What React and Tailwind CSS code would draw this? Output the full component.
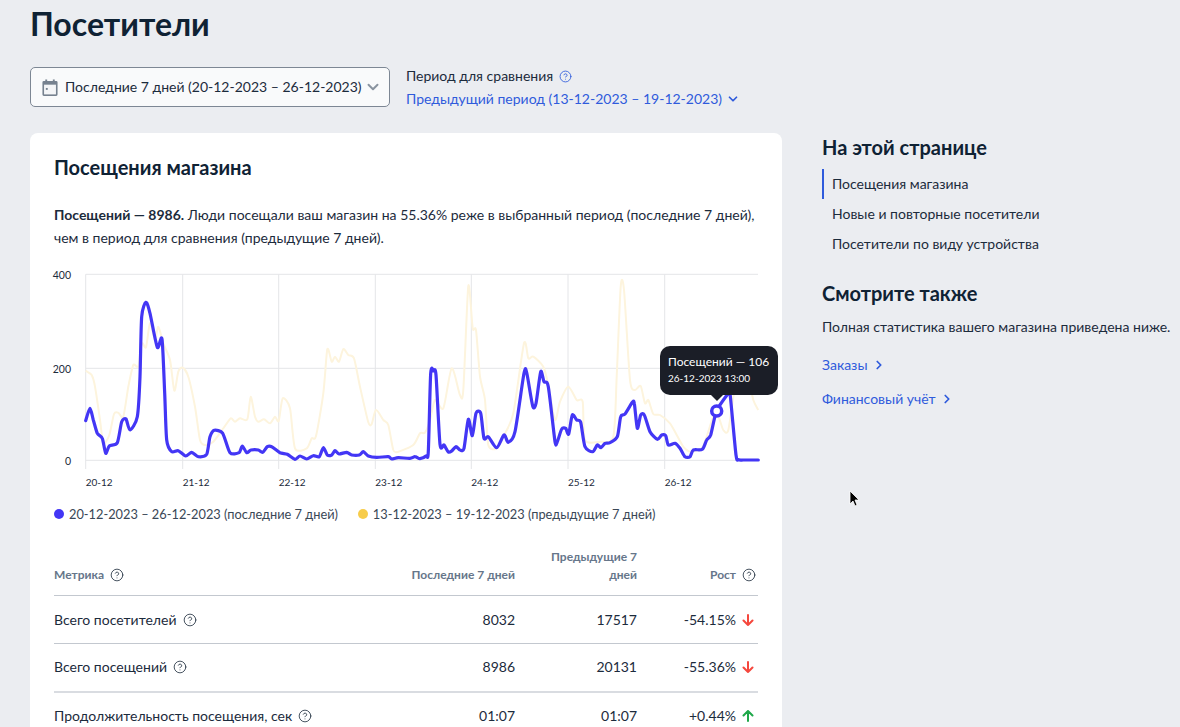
import React from 'react';
import { ChevronDown, ChevronRight, CircleHelp } from 'lucide-react';

// chart points are read off a 3x crop, x offset 40 and y offset 260 on the page
const toChart = ([x, y]) => [x / 3 - 14, y / 3 - 4];
const shift = (pts) => pts.map(([x, y]) => [x + 1080, y]);

const bluePoints = [
  [137,482],[150,445],[160,480],[172,520],[187,535],[197,580],[208,558],[232,548],[245,485],[258,477],[270,510],[292,470],[300,350],[305,170],[318,127],[330,160],[352,262],[366,237],[374,400],[380,540],[395,575],[415,572],[437,588],[455,577],[475,590],[500,583],[510,530],[523,511],[548,520],[570,578],[597,578],[607,558],[620,578],[633,570],[655,570],[668,577],[682,560],[695,560],[720,578],[742,583],[765,598],[780,588],[800,597],[820,587],[838,590],[850,563],[862,585],[875,585],[885,572],[897,582],[920,577],[935,585],[958,585],[970,575],[985,588],[1010,592],[1045,590],[1055,597],
  ...shift([[-5,593],[30,595],[45,590],[60,596],[78,588],[85,575],[92,340],[100,333],[108,345],[120,553],[132,555],[145,576],[155,573],[168,560],[180,570],[192,565],[205,478],[217,527],[228,460],[242,460],[252,535],[265,530],[290,563],[312,525],[325,547],[345,515],[372,340],[380,338],[398,438],[408,430],[422,335],[432,365],[445,380],[465,545],[472,545],[485,507],[497,505],[506,522],[517,465],[530,480],[542,487],[555,560],[578,575],[592,555],[603,563],[615,550],[630,548],[652,530],[662,470],[675,462],[697,427],[703,430],[712,505],[722,465],[733,465],[750,515],[772,538],[785,525],[797,527],[805,555],[825,550],[840,565],[855,590],[870,590],[880,570],[907,568],[920,540],[932,525],[950,452],[985,400],[990,400],[1008,585],[1016,599],[1030,600],[1075,600]]),
];

const yellowPoints = [
  [137,332],[155,345],[165,380],[180,480],[190,550],[208,525],[222,462],[235,458],[250,470],[265,380],[280,315],[295,320],[305,250],[318,262],[330,190],[345,240],[355,200],[370,250],[390,300],[403,392],[415,335],[428,323],[445,350],[465,440],[480,540],[495,555],[520,545],[550,505],[572,475],[585,485],[600,475],[622,478],[632,410],[645,470],[655,485],[672,478],[690,490],[705,470],[716,483],[728,415],[750,445],[765,565],[800,565],[815,535],[828,528],[850,400],[862,268],[875,305],[885,290],[897,305],[910,267],[925,285],[942,295],[960,380],[985,487],[995,492],[1008,450],[1030,480],[1045,495],[1060,570],
  ...shift([[-5,575],[40,555],[60,520],[75,518],[90,480],[105,420],[130,445],[155,325],[180,405],[190,390],[205,78],[218,205],[228,210],[240,350],[255,420],[265,555],[290,565],[310,530],[340,460],[372,250],[385,295],[400,290],[430,320],[445,375],[465,480],[480,425],[505,380],[530,420],[548,425],[555,540],[600,545],[640,530],[650,350],[662,80],[672,90],[690,360],[705,390],[722,378],[735,430],[745,420],[760,462],[780,465],[810,490],[830,525],[850,560],[870,575],[905,565],[920,530],[940,470],[955,470],[970,510],[985,510],[1005,380],[1025,300],[1045,350],[1060,420],[1075,450]]),
];

// catmull-rom through the points with a low tension, so steep spikes don't overshoot
const smoothPath = (raw) => {
  const pts = raw.map(toChart);
  const t = 8;
  let d = `M${pts[0][0]} ${pts[0][1]}`;
  for (let i = 0; i < pts.length - 1; i++) {
    const p0 = pts[i - 1] || pts[i];
    const p1 = pts[i];
    const p2 = pts[i + 1];
    const p3 = pts[i + 2] || p2;
    const c1 = [p1[0] + (p2[0] - p0[0]) / t, p1[1] + (p2[1] - p0[1]) / t];
    const c2 = [p2[0] - (p3[0] - p1[0]) / t, p2[1] - (p3[1] - p1[1]) / t];
    d += `C${c1[0].toFixed(1)} ${c1[1].toFixed(1)} ${c2[0].toFixed(1)} ${c2[1].toFixed(1)} ${p2[0].toFixed(1)} ${p2[1].toFixed(1)}`;
  }
  return d;
};

const gridY = [{ y: 10.3, label: '400', ly: 15 }, { y: 104.3, label: '200', ly: 109 }, { y: 196.3, label: '0', ly: 201 }];
const gridX = [
  { x: 31.7, label: '20-12' },
  { x: 128.7, label: '21-12' },
  { x: 224.7, label: '22-12' },
  { x: 321.3, label: '23-12' },
  { x: 417.3, label: '24-12' },
  { x: 514, label: '25-12' },
  { x: 610.7, label: '26-12' },
];

const VisitsChart = () => (
  <svg width="706" height="226" viewBox="0 0 706 226" className="block overflow-visible">
    {gridY.map((g) => (
      <g key={g.label}>
        <line x1="31.7" x2="704" y1={g.y} y2={g.y} stroke="#e4e5e8" strokeWidth="1" />
        <text x="17" y={g.ly} textAnchor="end" fontSize="10.5" fill="#1c2b3c">{g.label}</text>
      </g>
    ))}
    {gridX.map((g) => (
      <g key={g.label}>
        <line x1={g.x} x2={g.x} y1="10.3" y2="205" stroke="#e4e5e8" strokeWidth="1" />
        <text x={g.x} y="222" fontSize="10" fill="#1c2b3c">{g.label}</text>
      </g>
    ))}
    <path d={smoothPath(yellowPoints)} fill="none" stroke="#fdf4dd" strokeWidth="2" strokeLinejoin="round" />
    <path d={smoothPath(bluePoints)} fill="none" stroke="#4336f5" strokeWidth="3.2" strokeLinejoin="round" strokeLinecap="round" />
    <circle cx="662.7" cy="147" r="5" fill="#fff" stroke="#4336f5" strokeWidth="3.5" />
  </svg>
);

const CalendarIcon = () => (
  <svg width="16" height="17" viewBox="0 0 16 18" fill="none">
    <path d="M3 0.5h2V2h6V0.5h2V2h1.5A1.5 1.5 0 0 1 16 3.5v13a1.5 1.5 0 0 1-1.5 1.5h-13A1.5 1.5 0 0 1 0 16.5v-13A1.5 1.5 0 0 1 1.5 2H3z" fill="#76818f" />
    <rect x="1.7" y="6" width="12.6" height="10.3" fill="#f4f5f7" />
    <rect x="3.6" y="9.5" width="2" height="2" fill="#76818f" />
  </svg>
);

const Help = ({ className = 'text-[#1f2d3d]' }) => (
  <CircleHelp size={14} strokeWidth={1.4} className={`shrink-0 ${className}`} />
);

// short, wide arrow, the lucide one is too narrow here
const GrowthArrow = ({ up }) => (
  <svg width="12" height="12" viewBox="0 0 12 12" fill="none" strokeWidth="2" strokeLinecap="round" strokeLinejoin="round"
    className={up ? 'rotate-180 text-[#1fa84a]' : 'text-[#f5473d]'} stroke="currentColor">
    <path d="M6 1v10M1.5 6.5L6 11l4.5-4.5" />
  </svg>
);

const rows = [
  { name: 'Всего посетителей', now: '8032', prev: '17517', growth: '-54.15%', up: false, border: 'border-b border-[#c3c8cf]' },
  { name: 'Всего посещений', now: '8986', prev: '20131', growth: '-55.36%', up: false, border: 'border-b-2 border-[#d9dce1]' },
  { name: 'Продолжительность посещения, сек', now: '01:07', prev: '01:07', growth: '+0.44%', up: true, border: '' },
];

const MetricsTable = () => (
  <table className="w-full border-collapse text-sm text-[#1c2b3c]">
    <thead>
      <tr className="border-b border-[#c3c8cf] text-xs font-bold text-[#66768a]">
        <th className="pb-[11px] text-left align-bottom font-bold">
          <span className="flex items-center gap-[6px] leading-[18px]">Метрика <Help className="text-[#1f2d3d]" /></span>
        </th>
        <th className="w-[170px] pb-[11px] text-right align-bottom font-bold leading-[18px]">Последние 7 дней</th>
        <th className="w-[122px] pb-[11px] pl-[24px] text-right align-bottom font-bold leading-[18px]">Предыдущие 7 дней</th>
        <th className="w-[121px] pb-[11px] text-right align-bottom font-bold">
          <span className="flex items-center justify-end gap-[6px] pr-[2px] leading-[18px]">Рост <Help /></span>
        </th>
      </tr>
    </thead>
    <tbody>
      {rows.map((r) => (
        <tr key={r.name} className={`h-[48px] ${r.border}`}>
          <td>
            <span className="flex items-center gap-[6px]">{r.name} <Help /></span>
          </td>
          <td className="text-right">{r.now}</td>
          <td className="text-right">{r.prev}</td>
          <td>
            <span className="flex items-center justify-end gap-[6px] pr-[4px]">
              {r.growth}
              <GrowthArrow up={r.up} />
            </span>
          </td>
        </tr>
      ))}
    </tbody>
  </table>
);

const SideNav = () => (
  <aside className="ml-[40px] w-[358px] shrink-0 text-[#1c2b3c]">
    <h2 className="text-xl font-bold leading-[28px] text-[#0f2234]">На этой странице</h2>
    <ul className="mt-[8px] text-sm">
      <li className="flex h-[30px] items-center border-l-2 border-[#2f5bdc] pl-[8px]">Посещения магазина</li>
      <li className="flex h-[30px] items-center border-l-2 border-transparent pl-[8px]">Новые и повторные посетители</li>
      <li className="flex h-[30px] items-center border-l-2 border-transparent pl-[8px]">Посетители по виду устройства</li>
    </ul>
    <h2 className="mt-[20px] text-xl font-bold leading-[28px] text-[#0f2234]">Смотрите также</h2>
    <p className="mt-[10px] text-sm leading-[20px]">Полная статистика вашего магазина приведена ниже.</p>
    <a className="mt-[18px] flex items-center gap-[4px] text-sm leading-[20px] text-[#2f5bdc]">
      Заказы <ChevronRight size={14} strokeWidth={3} />
    </a>
    <a className="mt-[14px] flex items-center gap-[4px] text-sm leading-[20px] text-[#2f5bdc]">
      Финансовый учёт <ChevronRight size={14} strokeWidth={3} />
    </a>
  </aside>
);

export default function App() {
  return (
    <div className="relative h-[727px] overflow-hidden bg-[#ebedf1] pl-[30px] font-['Lato','Noto_Sans',sans-serif] text-[#1c2b3c]">
      <h1 className="pt-[4px] text-[32px] font-bold leading-[40px] text-[#0f2234]">Посетители</h1>

      <div className="mt-[22px] flex items-start">
        <button className="mt-[1px] flex h-[40px] w-[360px] items-center rounded-[5px] border border-[#7d8794] bg-[#f9fafb] pl-[11px] text-sm">
          <CalendarIcon />
          <span className="ml-[7px]">Последние 7 дней (20-12-2023 – 26-12-2023)</span>
          <ChevronDown size={18} strokeWidth={2.6} className="ml-[2px] text-[#8a94a0]" />
        </button>
        <div className="ml-[16px] text-sm">
          <div className="flex items-center gap-[6px] leading-[20px]">
            Период для сравнения <CircleHelp size={13} strokeWidth={1.6} className="text-[#2f5bdc]" />
          </div>
          <div className="mt-[3px] flex items-center gap-[4px] leading-[20px] text-[#2f5bdc]">
            Предыдущий период (13-12-2023 – 19-12-2023) <ChevronDown size={14} strokeWidth={3} />
          </div>
        </div>
      </div>

      <div className="mt-[24px] flex items-start">
        <main className="w-[752px] shrink-0 rounded-lg bg-white px-[24px] pt-[20px] pb-[24px]">
          <h2 className="text-xl font-bold leading-[28px] text-[#0f2234]">Посещения магазина</h2>
          <p className="mt-[22px] text-sm leading-[23px]">
            <b>Посещений — 8986.</b> Люди посещали ваш магазин на 55.36% реже в выбранный период (последние 7 дней), чем в период для сравнения (предыдущие 7 дней).
          </p>
          <div className="mt-[15px]">
            <VisitsChart />
          </div>
          <div className="mt-[14px] flex items-center text-[12.8px] leading-[20px] text-[#3a4756]">
            <span className="mr-[5px] h-[10px] w-[10px] rounded-full bg-[#4336f5]" />
            20-12-2023 – 26-12-2023 (последние 7 дней)
            <span className="ml-[20px] mr-[5px] h-[10px] w-[10px] rounded-full bg-[#f7cc4a]" />
            13-12-2023 – 19-12-2023 (предыдущие 7 дней)
          </div>
          <div className="mt-[24px]">
            <MetricsTable />
          </div>
        </main>
        <SideNav />
      </div>

      {/* tooltip over the chart point */}
      <div className="absolute left-[660px] top-[346px] h-[49px] w-[118px] rounded-[10px] bg-[#1b1e27] px-[8px] pt-[7px] text-white">
        <div className="whitespace-nowrap text-[12px] leading-[18px]">Посещений — 106</div>
        <div className="whitespace-nowrap text-[10px] leading-[15px]">26-12-2023 13:00</div>
        <div className="absolute left-[50px] top-[48px] h-0 w-0 border-x-[7px] border-t-[7px] border-x-transparent border-t-[#1b1e27]" />
      </div>

      {/* mouse pointer */}
      <svg className="absolute left-[849px] top-[490px]" width="12" height="18" viewBox="0 0 12 18">
        <path d="M1 1v13l3-3 2 5 2-1-2-5h4z" fill="#000" stroke="#fff" strokeWidth="0.8" />
      </svg>
    </div>
  );
}
